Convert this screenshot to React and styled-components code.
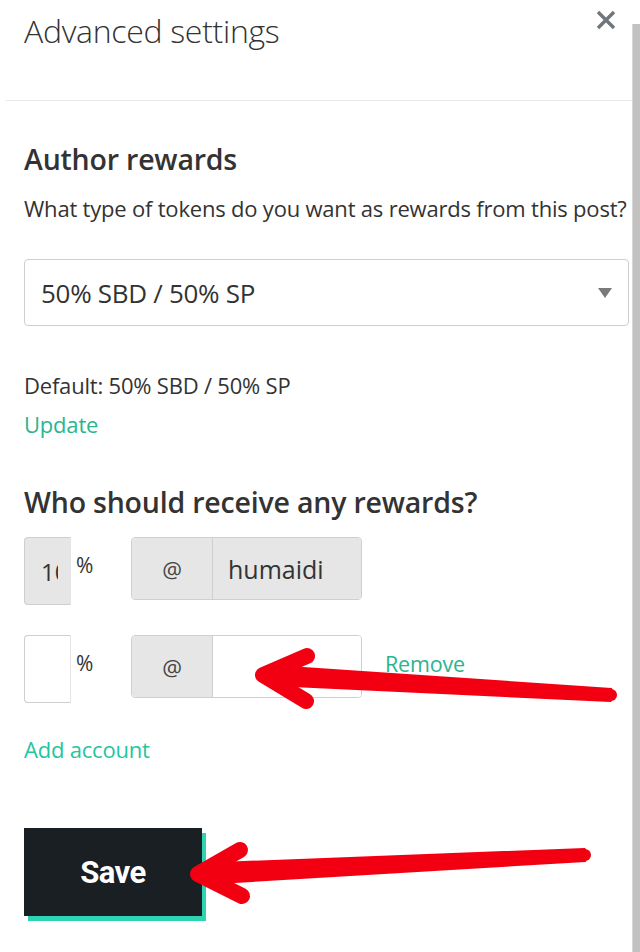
import React from 'react'
import styled, { createGlobalStyle } from 'styled-components'

const GlobalStyle = createGlobalStyle`
  html, body {
    margin: 0;
    padding: 0;
    background: #fff;
  }
  body {
    font-family: "Open Sans", "Noto Sans", sans-serif;
    color: #333;
  }
`

const Page = styled.div`
  position: relative;
  display: flex;
  width: 640px;
  height: 952px;
  overflow: hidden;
  background: #fff;
`

const Modal = styled.div`
  flex: 1;
  margin-left: 6px;
`

const Scrollbar = styled.div`
  width: 7px;
  margin-top: 24px;
  background: #c2c2c2;
  border-left: 1px solid #d6d6d6;
`

const Header = styled.div`
  display: flex;
  justify-content: space-between;
  align-items: flex-start;
  height: 100px;
  padding: 0 14px 0 18px;
  border-bottom: 1px solid #e8e8e8;
`

const Title = styled.h1`
  margin: 9px 0 0;
  font-size: 32px;
  font-weight: 300;
  line-height: 44px;
  color: #333;
  letter-spacing: -0.3px;
`

const Close = styled.button`
  margin-top: 8px;
  padding: 0;
  border: 0;
  background: none;
  width: 24px;
  height: 24px;
  cursor: pointer;
  svg { display: block; }
`

const Body = styled.div`
  padding: 40px 3px 0 18px;
`

const Heading = styled.h2`
  margin: ${p => p.$mt || 0}px 0 0;
  font-size: 28.5px;
  font-weight: 600;
  line-height: 36px;
  color: #333;
  letter-spacing: -0.2px;
`

const Text = styled.p`
  margin: ${p => p.$mt || 0}px 0 0;
  font-size: 22px;
  line-height: 30px;
  color: #333;
  letter-spacing: -0.2px;
  white-space: nowrap;
`

const Link = styled.a`
  display: block;
  margin-top: ${p => p.$mt || 0}px;
  font-size: 22px;
  line-height: 30px;
  color: ${p => p.$bright ? '#22c6a0' : '#2ab58f'};
  text-decoration: none;
  letter-spacing: -0.2px;
`

const Select = styled.div`
  display: flex;
  align-items: center;
  justify-content: space-between;
  width: 605px;
  height: 67px;
  margin-top: 36px;
  padding: 0 16px;
  box-sizing: border-box;
  border: 1px solid #cfcfcf;
  border-radius: 4px;
  font-size: 26px;
  color: #333;
  letter-spacing: -0.3px;
`

const Caret = styled.span`
  width: 0;
  height: 0;
  border-left: 7px solid transparent;
  border-right: 7px solid transparent;
  border-top: 10px solid #7a7a7a;
`

const Rows = styled.div`
  display: flex;
  flex-direction: column;
  gap: 30px;
  margin-top: 17px;
`

const Row = styled.div`
  display: flex;
  align-items: flex-start;
`

const PercentInput = styled.input`
  width: 47px;
  height: 68px;
  margin: 0;
  box-sizing: border-box;
  padding: 0 12px 0 16px;
  border: 1px solid #cfcfcf;
  border-right-color: #e4e4e4;
  border-radius: 4px 0 0 4px;
  background: ${p => p.$disabled ? '#e6e6e6' : '#fff'};
  font-family: inherit;
  font-size: 24px;
  color: #333;
  outline: none;
`

const Sign = styled.span`
  width: 60px;
  padding: 13px 0 0 5px;
  box-sizing: border-box;
  font-size: 21px;
  line-height: 30px;
  color: #333;
`

const Group = styled.div`
  display: flex;
  width: 231px;
  height: 63px;
  box-sizing: border-box;
  border: 1px solid #cfcfcf;
  border-radius: 4px;
  overflow: hidden;
`

const Addon = styled.span`
  display: flex;
  align-items: center;
  justify-content: center;
  width: 80px;
  flex: none;
  background: #e6e6e6;
  border-right: 1px solid #cfcfcf;
  font-size: 22px;
  color: #444;
`

const FieldInput = styled.input`
  flex: 1;
  min-width: 0;
  margin: 0;
  padding: 0 0 0 15px;
  border: 0;
  background: ${p => p.$disabled ? '#e6e6e6' : '#fff'};
  font-family: inherit;
  font-size: 25px;
  color: #333;
  outline: none;
`

const RowLink = styled.a`
  margin: 14px 0 0 23px;
  font-size: 21.5px;
  line-height: 30px;
  color: #2ab58f;
  text-decoration: none;
  letter-spacing: -0.2px;
`

const SaveButton = styled.button`
  display: block;
  width: 178px;
  height: 88px;
  margin-top: 64px;
  border: 0;
  border-radius: 0;
  background: #1a1f24;
  box-shadow: 4px 5px 0 #2ed3b1;
  color: #fff;
  font-family: Roboto, "Liberation Sans", sans-serif;
  font-size: 31px;
  font-weight: 700;
  letter-spacing: -0.5px;
  cursor: pointer;
`

const Overlay = styled.svg`
  position: absolute;
  left: 0;
  top: 0;
  pointer-events: none;
`

const red = '#f20012'

function Arrow({ tip, tail, up, down, w1, w2 }) {
  // tapered shaft from head to tail, head as two thick strokes
  const dx = tail[0] - tip[0]
  const dy = tail[1] - tip[1]
  const len = Math.hypot(dx, dy)
  const nx = -dy / len
  const ny = dx / len
  const s = [tip[0] + dx * 0.04, tip[1] + dy * 0.04]
  const pts = [
    [s[0] + nx * w1 / 2, s[1] + ny * w1 / 2],
    [tail[0] + nx * w2 / 2, tail[1] + ny * w2 / 2],
    [tail[0] - nx * w2 / 2, tail[1] - ny * w2 / 2],
    [s[0] - nx * w1 / 2, s[1] - ny * w1 / 2],
  ]
  return (
    <g fill={red} stroke={red} strokeLinecap="round" strokeLinejoin="round">
      <polygon points={pts.map(p => p.join(',')).join(' ')} strokeWidth="2" />
      <circle cx={tail[0]} cy={tail[1]} r={w2 / 2} stroke="none" />
      <polyline points={`${up.join(',')} ${tip.join(',')} ${down.join(',')}`} fill="none" strokeWidth="16" />
    </g>
  )
}

export default function App() {
  return (
    <>
      <GlobalStyle />
      <Page>
        <Modal>
          <Header>
            <Title>Advanced settings</Title>
            <Close aria-label="Close">
              <svg width="24" height="24" viewBox="0 0 24 24">
                <path d="M4 4 L20 20 M20 4 L4 20" stroke="#6f767c" strokeWidth="3.4" />
              </svg>
            </Close>
          </Header>
          <Body>
            <Heading>Author rewards</Heading>
            <Text $mt={16}>What type of tokens do you want as rewards from this post?</Text>
            <Select>
              <span>50% SBD / 50% SP</span>
              <Caret />
            </Select>
            <Text $mt={44}>Default: 50% SBD / 50% SP</Text>
            <Link $mt={9}>Update</Link>
            <Heading $mt={45}>Who should receive any rewards?</Heading>
            <Rows>
              <Row>
                <PercentInput $disabled readOnly value="100" />
                <Sign>%</Sign>
                <Group>
                  <Addon>@</Addon>
                  <FieldInput $disabled readOnly value="humaidi" />
                </Group>
              </Row>
              <Row>
                <PercentInput readOnly value="" />
                <Sign>%</Sign>
                <Group>
                  <Addon>@</Addon>
                  <FieldInput readOnly value="" />
                </Group>
                <RowLink>Remove</RowLink>
              </Row>
            </Rows>
            <Link $bright $mt={31}>Add account</Link>
            <SaveButton>Save</SaveButton>
          </Body>
        </Modal>
        <Scrollbar />
        <Overlay width="640" height="952">
          <Arrow tip={[263, 675]} tail={[611, 695]} up={[307, 656]} down={[306, 701]} w1={19} w2={12} />
          <Arrow tip={[198, 874]} tail={[585, 855]} up={[240, 850]} down={[242, 896]} w1={20} w2={12} />
        </Overlay>
      </Page>
    </>
  )
}
